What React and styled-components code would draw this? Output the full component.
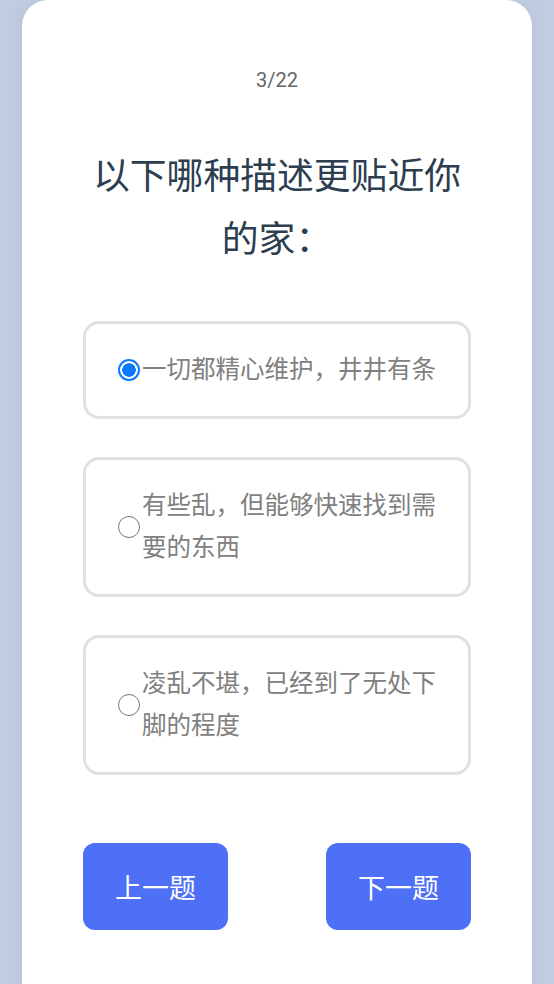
import React, { useState } from 'react'
import { styled, createGlobalStyle } from 'styled-components'

const GlobalStyle = createGlobalStyle`
  html, body {
    margin: 0;
    padding: 0;
    background: #c2cce0;
    font-family: Roboto, "Noto Sans CJK SC", sans-serif;
  }
`

const options = [
  '一切都精心维护，井井有条',
  '有些乱，但能够快速找到需要的东西',
  '凌乱不堪，已经到了无处下脚的程度',
]

function App() {
  const [picked, setPicked] = useState(0)

  return (
    <Page>
      <GlobalStyle />
      <Card>
        <Counter>3/22</Counter>
        <Question>以下哪种描述更贴近你的家：</Question>
        <OptionList>
          {options.map((text, i) => (
            <Option key={i} onClick={() => setPicked(i)}>
              <Radio $checked={picked === i} />
              <OptionText>{text}</OptionText>
            </Option>
          ))}
        </OptionList>
        <Actions>
          <NavButton>上一题</NavButton>
          <NavButton>下一题</NavButton>
        </Actions>
      </Card>
    </Page>
  )
}

export default App

const Page = styled.div`
  display: flex;
  justify-content: center;
  min-height: 984px;
`

const Card = styled.div`
  width: 510px;
  box-sizing: border-box;
  background: #fff;
  border-radius: 26px 26px 0 0;
  box-shadow: 0 0 18px rgba(60, 80, 120, 0.08);
  padding: 60px 61px 60px 61px;
  display: flex;
  flex-direction: column;
`

const Counter = styled.div`
  text-align: center;
  font-size: 20px;
  line-height: 40px;
  color: #666;
`

const Question = styled.h2`
  margin: 45px 0 50px;
  padding: 0;
  text-align: center;
  font-size: 36.8px;
  font-weight: 400;
  line-height: 63px;
  color: #2c3e50;
`

const OptionList = styled.div`
  display: flex;
  flex-direction: column;
  gap: 38px;
`

const Option = styled.div`
  display: flex;
  align-items: center;
  border: 3px solid #e0e0e0;
  border-radius: 16px;
  padding: 25px 26px 25px 32px;
  cursor: pointer;
`

const Radio = styled.span`
  flex: none;
  width: 22px;
  height: 22px;
  box-sizing: border-box;
  border-radius: 50%;
  margin-right: 2px;
  border: ${({ $checked }) => ($checked ? '2px solid #0a7aff' : '1.5px solid #767676')};
  background: ${({ $checked }) =>
    $checked ? 'radial-gradient(circle, #0a7aff 0 6.5px, #fff 7px)' : '#fff'};
`

const OptionText = styled.span`
  font-size: 24.5px;
  line-height: 42px;
  color: #808080;
`

const Actions = styled.div`
  display: flex;
  justify-content: space-between;
  margin-top: 68px;
`

const NavButton = styled.button`
  width: 145px;
  height: 87px;
  border: none;
  border-radius: 12px;
  background: #4d70f7;
  color: #fff;
  font-family: Roboto, "Noto Sans CJK SC", sans-serif;
  font-size: 27px;
  cursor: pointer;
`
